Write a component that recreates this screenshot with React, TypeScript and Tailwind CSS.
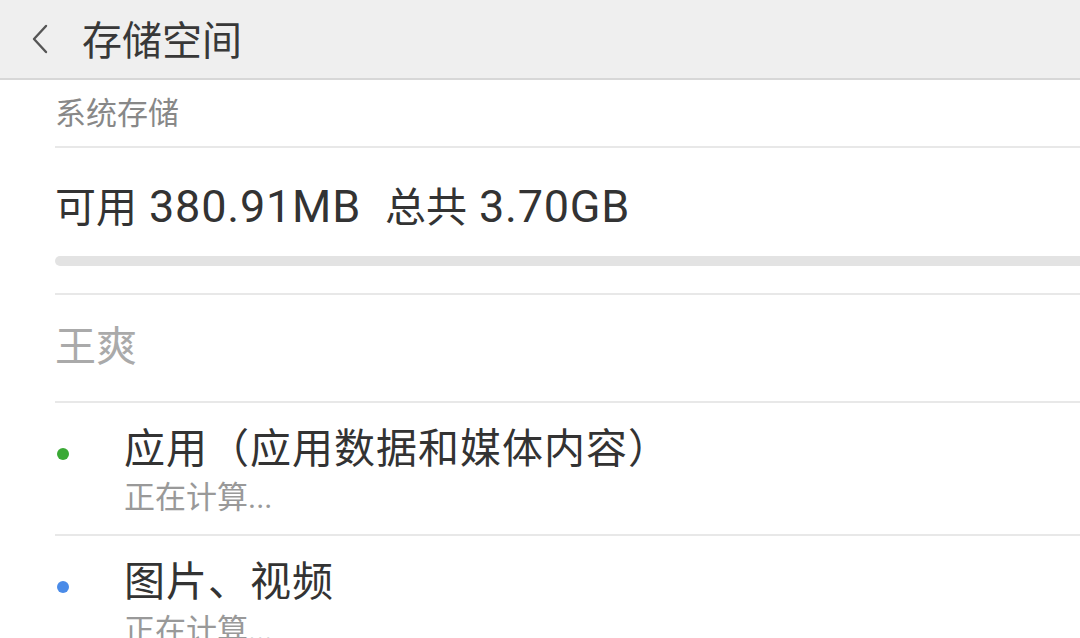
import React from 'react';

const font = { fontFamily: 'Roboto, "Noto Sans CJK SC", sans-serif' };

interface StorageItem {
  label: string;
  dot: string;
  status: string;
}

const items: StorageItem[] = [
  { label: '应用（应用数据和媒体内容）', dot: 'bg-[#3aa935]', status: '正在计算...' },
  { label: '图片、视频', dot: 'bg-[#4a8be8]', status: '正在计算...' },
];

const App: React.FC = () => {
  return (
    <div className="w-[1080px] h-[638px] overflow-hidden bg-white" style={font}>
      <div className="h-[80px] bg-[#efefef] border-b-2 border-[#d7d7d7] flex items-center">
        <svg className="ml-[31px] w-[18px] h-[30px]" viewBox="0 0 18 30" fill="none">
          <path d="M15 2 L3 15 L15 28" stroke="#555" strokeWidth="2.4" strokeLinecap="round" strokeLinejoin="round" />
        </svg>
        <h1 className="ml-[33px] text-[40px] leading-none text-[#383838] pt-[6px]">存储空间</h1>
      </div>

      <div className="pl-[55px]">
        <div className="h-[68px] flex items-center border-b-2 border-[#e8e8e8]">
          <span className="text-[31px] leading-none text-[#888] pt-[1px]">系统存储</span>
        </div>

        <div className="h-[147px] border-b-2 border-[#e8e8e8] pt-[36px]">
          <div className="leading-[46px] text-[#333] whitespace-nowrap">
            <span className="text-[41px]">可用</span>
            <span className="text-[45px] tracking-[0.8px]">&nbsp;380.91MB&nbsp;&nbsp;</span>
            <span className="text-[41px]">总共</span>
            <span className="text-[45px] tracking-[0.8px]">&nbsp;3.70GB</span>
          </div>
          <div className="mt-[16px] h-[10px] rounded-l-full bg-[#e3e3e3]" />
        </div>

        <div className="h-[108px] flex items-center border-b-2 border-[#e8e8e8]">
          <span className="text-[41px] leading-none text-[#aaa] pb-[2px]">王爽</span>
        </div>

        {items.map((item) => (
          <div key={item.label} className="h-[133px] flex border-b-2 border-[#e8e8e8]">
            <div className="w-[69px] pt-[45px] pl-[2px]">
              <div className={`w-[12px] h-[12px] rounded-full ${item.dot}`} />
            </div>
            <div className="flex flex-col pt-[25px]">
              <span className="text-[41px] leading-[42px] tracking-[1px] text-[#333] whitespace-nowrap">{item.label}</span>
              <span className="mt-[12px] text-[31px] leading-none text-[#999] whitespace-nowrap">{item.status}</span>
            </div>
          </div>
        ))}
      </div>
    </div>
  );
};

export default App;
